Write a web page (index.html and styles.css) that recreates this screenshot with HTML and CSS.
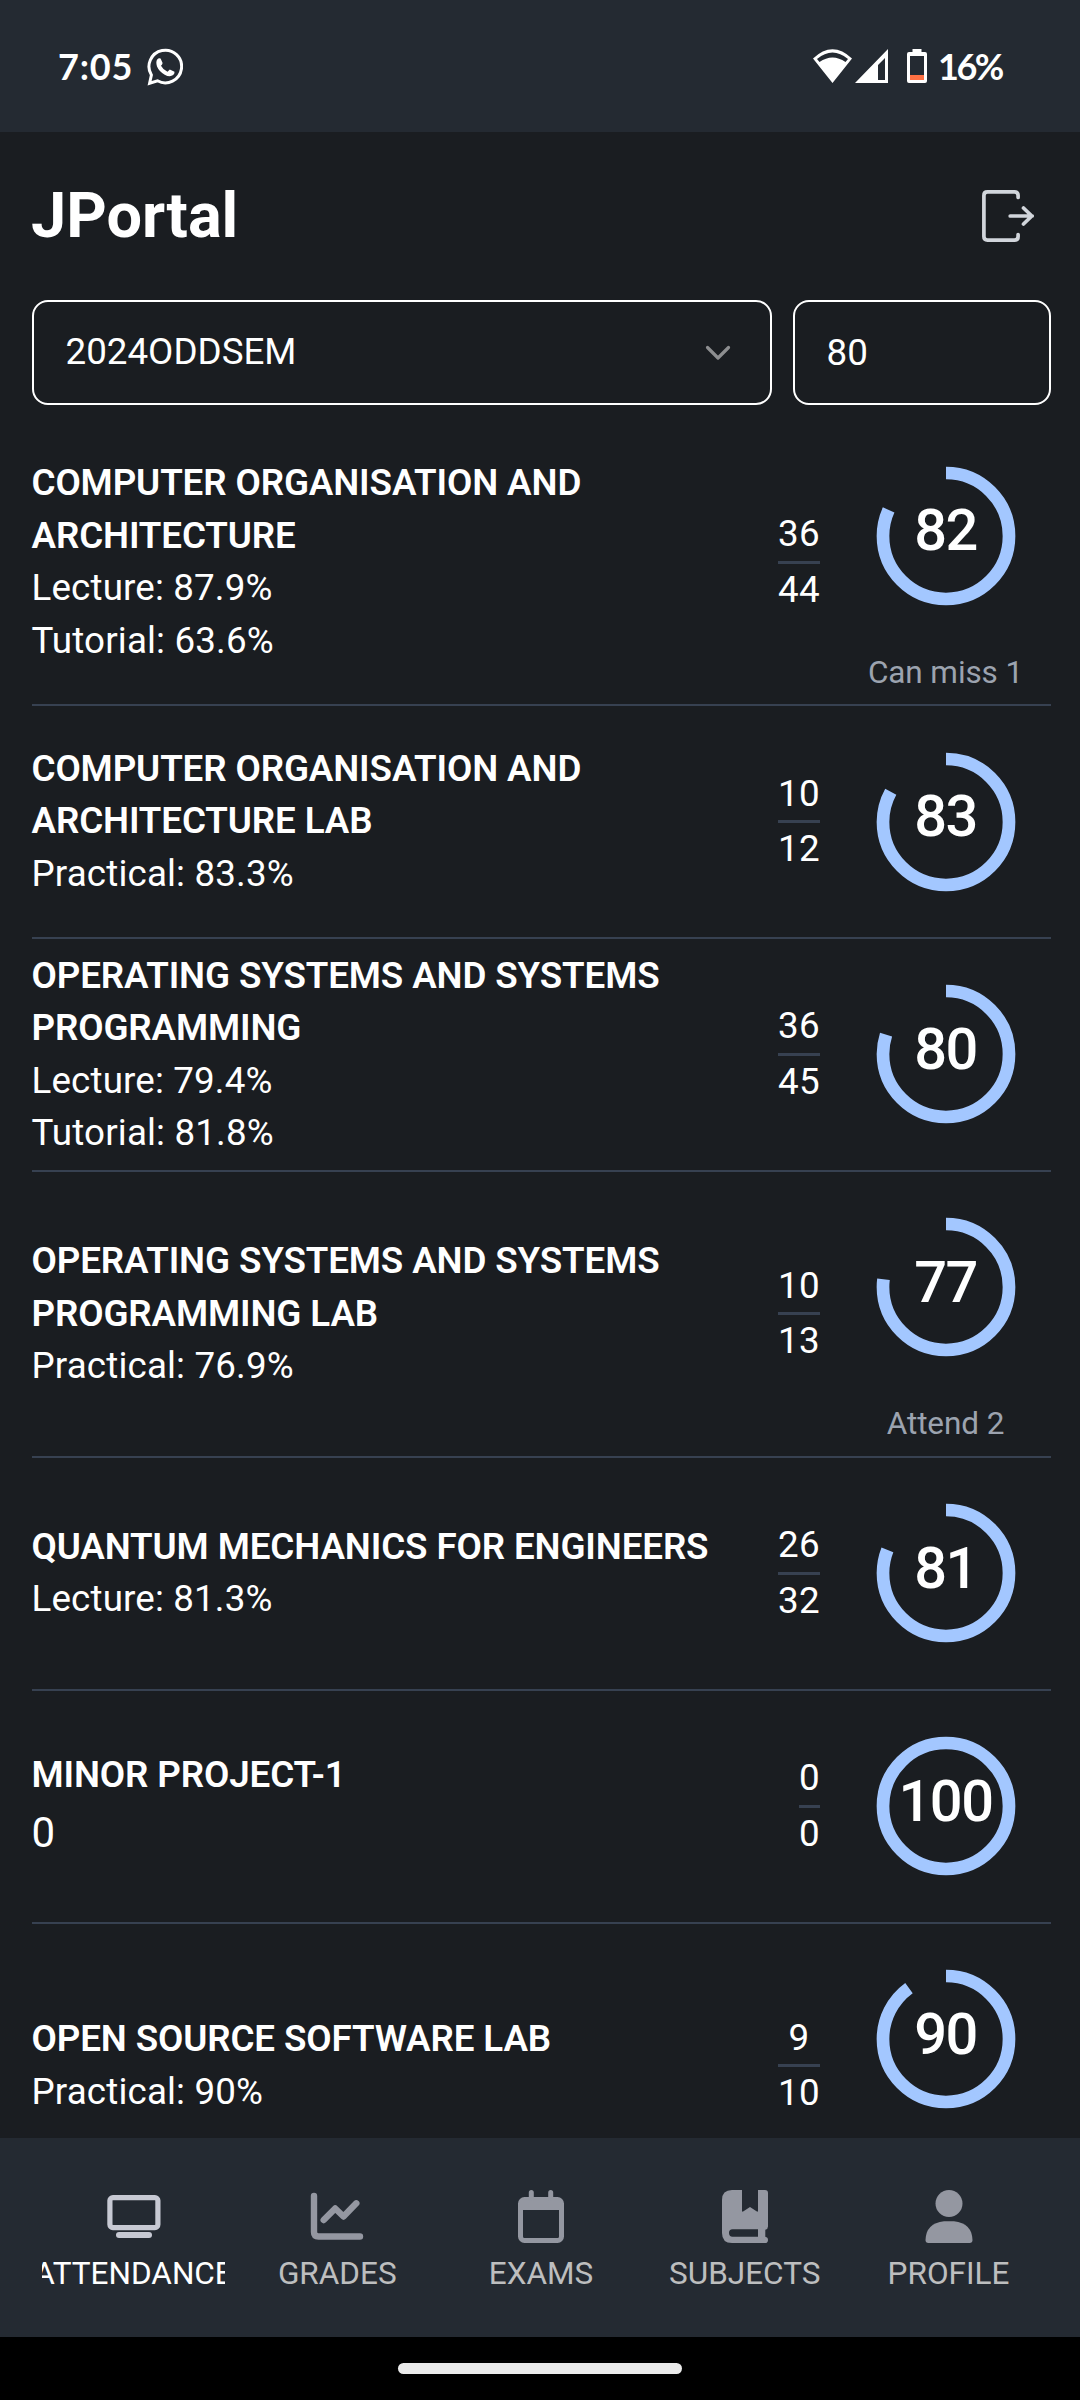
FILE: index.html
```html
<!DOCTYPE html>
<html lang="en">
<head>
<meta charset="utf-8">
<title>JPortal</title>
<link rel="stylesheet" href="styles.css">
</head>
<body>
<header class="status">
  <div class="status-left">
    <span class="clock">7:05</span>
    <svg class="whatsapp" viewBox="0 0 36 38" width="36" height="38" fill="none" stroke="#fff" stroke-width="3"><path d="M2.600 35.200 4.400 27A16.300 16.300 0 1 1 10.500 32.800Z"/><path fill="#fff" stroke="none" d="M10.200 11.500q1.500-1.700 3.400-.9l2 4.500q-.2 1.500-1.600 2.700 2.200 4.200 6.500 6l2.300-2.300 4.700 2.200q.3 2-1.300 3.400-3.400 2.400-8.500-.4-5.500-3.200-7.700-8.300-1.400-4.400.2-6.900z"/></svg>
  </div>
  <div class="status-right">
    <svg viewBox="0 0 39 34" width="39" height="34"><path fill="#fff" fill-rule="evenodd" d="M0 9.500Q19.500-9 39 9.500L19.500 34ZM4 10 6.500 13Q19.500 4 32.500 13L35 10Q19.500-3 4 10Z"/></svg>
    <svg class="signal" viewBox="0 0 33 34" width="33" height="34"><path fill="#fff" fill-rule="evenodd" d="M33 0v34H0zM30 9 23 16v15h7z"/></svg>
    <svg class="battery" viewBox="0 0 20 34" width="20" height="34"><path fill="#fff" fill-rule="evenodd" d="M5.500 0h9v3H18q2 0 2 2v27q0 2-2 2H2q-2 0-2-2V5q0-2 2-2h3.500zM3 7v24h14V7z"/><path fill="#ff7043" d="M3 26h14v5H3z"/></svg>
    <span class="percent">16%</span>
  </div>
</header>
<main class="screen">
  <div class="title-bar">
    <h1>JPortal</h1>
    <svg viewBox="0 0 52 52" width="52" height="52" fill="none" stroke="#d1d5db" stroke-width="3.700" stroke-linecap="round" stroke-linejoin="round"><path d="M36.100 7.500V5.500q0-3.600-3.600-3.600H5.500Q1.900 1.900 1.900 5.500v41q0 3.600 3.600 3.600h27q3.600 0 3.600-3.600v-2M28.200 26h22M41.500 18l8.300 8-8.300 8"/></svg>
  </div>
  <div class="filters">
    <div class="field">2024ODDSEM
      <svg viewBox="0 0 26 16" width="26" height="16" fill="none" stroke="#8d8e90" stroke-width="3.200" stroke-linecap="round" stroke-linejoin="round"><path d="m2.500 2.500 10.500 10.500 10.500-10.500"/></svg>
    </div>
    <div class="field target">80</div>
  </div>
  <section class="courses">
    <article class="course noted">
      <div class="info"><h2>COMPUTER ORGANISATION AND ARCHITECTURE</h2><p>Lecture: 87.9%</p><p>Tutorial: 63.6%</p></div>
      <div class="fraction"><span>36</span><span>44</span></div>
      <div class="gauge"><div class="dial"><svg viewBox="0 0 140 140"><circle class="arc" pathLength="100" cx="70" cy="70" r="63" stroke-dasharray="81.800 100"/></svg><b>82</b></div><small>Can miss 1</small></div>
    </article>
    <article class="course">
      <div class="info"><h2>COMPUTER ORGANISATION AND ARCHITECTURE LAB</h2><p>Practical: 83.3%</p></div>
      <div class="fraction"><span>10</span><span>12</span></div>
      <div class="gauge"><div class="dial"><svg viewBox="0 0 140 140"><circle class="arc" pathLength="100" cx="70" cy="70" r="63" stroke-dasharray="83 100"/></svg><b>83</b></div></div>
    </article>
    <article class="course">
      <div class="info"><h2>OPERATING SYSTEMS AND SYSTEMS PROGRAMMING</h2><p>Lecture: 79.4%</p><p>Tutorial: 81.8%</p></div>
      <div class="fraction"><span>36</span><span>45</span></div>
      <div class="gauge"><div class="dial"><svg viewBox="0 0 140 140"><circle class="arc" pathLength="100" cx="70" cy="70" r="63" stroke-dasharray="80 100"/></svg><b>80</b></div></div>
    </article>
    <article class="course noted">
      <div class="info"><h2>OPERATING SYSTEMS AND SYSTEMS PROGRAMMING LAB</h2><p>Practical: 76.9%</p></div>
      <div class="fraction"><span>10</span><span>13</span></div>
      <div class="gauge"><div class="dial"><svg viewBox="0 0 140 140"><circle class="arc" pathLength="100" cx="70" cy="70" r="63" stroke-dasharray="77 100"/></svg><b>77</b></div><small>Attend 2</small></div>
    </article>
    <article class="course">
      <div class="info"><h2>QUANTUM MECHANICS FOR ENGINEERS</h2><p>Lecture: 81.3%</p></div>
      <div class="fraction"><span>26</span><span>32</span></div>
      <div class="gauge"><div class="dial"><svg viewBox="0 0 140 140"><circle class="arc" pathLength="100" cx="70" cy="70" r="63" stroke-dasharray="81 100"/></svg><b>81</b></div></div>
    </article>
    <article class="course">
      <div class="info"><h2>MINOR PROJECT-1</h2><p class="none">0</p></div>
      <div class="fraction"><span>0</span><span>0</span></div>
      <div class="gauge"><div class="dial"><svg viewBox="0 0 140 140"><circle class="arc" cx="70" cy="70" r="63"/></svg><b>100</b></div></div>
    </article>
    <article class="course noted">
      <div class="info"><h2>OPEN SOURCE SOFTWARE LAB</h2><p>Practical: 90%</p></div>
      <div class="fraction"><span>9</span><span>10</span></div>
      <div class="gauge"><div class="dial"><svg viewBox="0 0 140 140"><circle class="arc" pathLength="100" cx="70" cy="70" r="63" stroke-dasharray="90 100"/></svg><b>90</b></div></div>
    </article>
  </section>
</main>
<nav class="tabs">
  <a class="tab active"><svg viewBox="0 0 54 54" fill="none" stroke="currentColor" stroke-width="5.200" stroke-linecap="round"><rect x="2.900" y="7.600" width="48" height="30" rx="3"/><path stroke-width="6" d="M12 45h30"/></svg><span>ATTENDANCE</span></a>
  <a class="tab"><svg viewBox="0 0 54 54" fill="none" stroke="currentColor" stroke-width="6.400" stroke-linecap="round" stroke-linejoin="round"><path d="M4 6v36q0 4.500 4.500 4.500H50M13.700 30l11.500-11.500 8.300 8L46.300 13.300"/></svg><span>GRADES</span></a>
  <a class="tab"><svg viewBox="0 0 54 54" fill="none" stroke="currentColor" stroke-width="5" stroke-linecap="round"><rect x="6.500" y="9.500" width="41" height="41" rx="4"/><path stroke-linecap="butt" stroke-width="11" d="M7 14.500h40"/><path d="M17.300 2.500v6M36.700 2.500v6"/></svg><span>EXAMS</span></a>
  <a class="tab"><svg viewBox="0 0 54 54" fill="currentColor"><path fill-rule="evenodd" d="M14 0h10v20.500q0 2 1.500.8L32 17l6.500 4.300q1.500 1.200 1.500-.8V0h7q3 0 3 3v33.500q0 2.500-2.700 3.200v7q2.700.5 2.700 3.200 0 3.100-3 3.100H14Q4 53 4 43V10Q4 0 14 0m.5 39.300q-3.500 0-3.500 3.700t3.500 3.700H40v-7.400z"/></svg><span>SUBJECTS</span></a>
  <a class="tab"><svg viewBox="0 0 54 54" fill="currentColor"><circle cx="27" cy="13.500" r="13.500"/><path d="M22 31.200h10q18 2 18.500 18.800 0 3-3 3h-41q-3 0-3-3Q4 33.200 22 31.200"/></svg><span>PROFILE</span></a>
</nav>
<footer class="gesture"><div class="pill"></div></footer>
</body>
</html>
```

FILE: styles.css
```css
* { box-sizing: border-box; }
body {
  margin: 0;
  width: 1080px;
  height: 2400px;
  display: flex;
  flex-direction: column;
  overflow: hidden;
  background: #1a1d21;
  color: #fff;
  font-family: Roboto, sans-serif;
  font-size: 36.75px;
  line-height: 52.5px;
}
h1, h2, p { margin: 0; }
svg { display: block; flex: none; }

.status {
  flex: none;
  height: 132px;
  padding: 0 76px 0 58px;
  display: flex;
  justify-content: space-between;
  align-items: center;
  background: #242a32;
}
.status-left, .status-right { display: flex; align-items: center; }
.clock { width: 74px; font: 700 36px/40px Lato, sans-serif; letter-spacing: 0.8px; }
.whatsapp { margin: 2px 0 0 15px; }
.signal { margin-left: 3px; }
.battery { margin: -1px 0 0 19px; }
.percent {
  width: 66px;
  margin-left: 11px;
  font: 700 36px/40px Lato, sans-serif;
  letter-spacing: -2.5px;
}

.screen { flex: 1; min-height: 0; overflow: hidden; padding: 0 29px 0 32px; }
.title-bar {
  height: 168px;
  padding: 0 17px 1px 0;
  display: flex;
  align-items: center;
  justify-content: space-between;
}
.title-bar h1 { margin-left: -1px; font-size: 63px; line-height: 84px; font-weight: 700; }
.filters { display: flex; gap: 21px; }
.field {
  flex: 1;
  height: 105px;
  padding: 0 39px 0 31.5px;
  display: flex;
  align-items: center;
  justify-content: space-between;
  border: 2px solid #fff;
  border-radius: 16px;
}
.target { flex: 0 0 258px; padding-top: 2px; }

.courses { padding-top: 15.2px; }
.course {
  height: 232.92px;
  display: flex;
  align-items: center;
  border-bottom: 2px solid #374151;
}
.course.noted { height: 285.92px; }
.info { flex: 1; margin-left: -0.5px; padding: 0.3px 40px 0 0; letter-spacing: 0.15px; }
.info h2 { font-size: 36.75px; line-height: 52.5px; font-weight: 600; letter-spacing: -0.12px; }
.info .none { font-size: 42px; line-height: 63px; }
.fraction { display: flex; flex-direction: column; text-align: center; letter-spacing: 0.35px; }
.fraction span + span { border-top: 3px solid #374151; }
.gauge {
  width: 211px;
  margin-left: 20px;
  align-self: stretch;
  display: flex;
  flex-direction: column;
  align-items: center;
}
.dial { height: 231px; display: grid; place-items: center; }
.dial > * { grid-area: 1 / 1; }
.dial svg { width: 140px; height: 140px; }
.arc {
  fill: none;
  stroke: #a3c7ff;
  stroke-width: 12.7;
  transform: rotate(-90deg);
  transform-origin: center;
}
.dial b { font-size: 57.75px; line-height: 60px; font-weight: 500; padding: 0 0 11px; letter-spacing: -1.5px; }
.gauge small { padding-top: 0.5px; font-size: 31.5px; line-height: 42px; letter-spacing: -0.1px; color: #9ca3af; }

.tabs {
  flex: none;
  height: 199px;
  padding: 52px 40px 0 42px;
  display: grid;
  grid-template-columns: repeat(5, 1fr);
  gap: 20.75px;
  background: #242a32;
}
.tab {
  min-width: 0;
  display: flex;
  flex-direction: column;
  align-items: center;
  overflow: hidden;
  color: #9497a1;
  font-size: 31.5px;
  line-height: 42px;
}
.tab svg { width: 54px; height: 54px; margin-bottom: 9px; }
.tab span { color: #bdbebf; }
.tab.active { color: #c7c9d3; }
.tab.active span { color: #fff; }

.gesture { flex: none; height: 63px; padding-top: 26px; background: #000; }
.pill { width: 284px; height: 11px; margin: 0 auto; border-radius: 6px; background: #ebebeb; }
```
